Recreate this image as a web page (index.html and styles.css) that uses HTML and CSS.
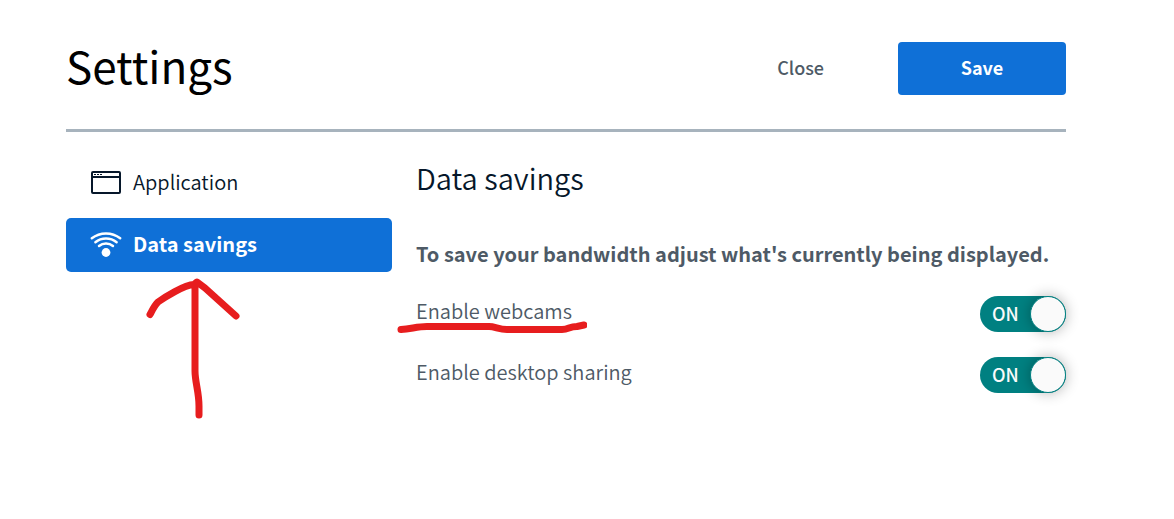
FILE: index.html
```html
<!DOCTYPE html>
<html lang="en">
<head>
<meta charset="utf-8">
<meta name="viewport" content="width=device-width, initial-scale=1">
<title>Settings</title>
<link rel="stylesheet" href="styles.css">
</head>
<body>
<main class="settings">
  <header class="header">
    <h1 class="title">Settings</h1>
    <div class="actions">
      <button class="btn btn-close" type="button">Close</button>
      <button class="btn btn-save" type="button">Save</button>
    </div>
  </header>
  <div class="body">
    <nav class="tabs" aria-label="Settings sections">
      <button class="tab" type="button">
        <svg class="icon" viewBox="0 0 32 28" aria-hidden="true">
          <rect x="2" y="4" width="28" height="21" rx="1" fill="none" stroke="currentColor" stroke-width="2"/>
          <path d="M2 9h28" stroke="currentColor" stroke-width="2"/>
          <path d="M4 6.500h2M7 6.500h2M10 6.500h2" stroke="currentColor" stroke-width="1"/>
        </svg>
        <span>Application</span>
      </button>
      <button class="tab tab-active" type="button" aria-current="true">
        <svg class="icon" viewBox="0 0 32 28" aria-hidden="true">
          <g fill="none" stroke="currentColor" stroke-width="2.500" stroke-linecap="round">
            <path d="M1.800 8.300Q8 3.400 16 3.400T30.200 8.300"/>
            <path d="M5.400 12.200Q10 8.500 16 8.500T26.600 12.200"/>
            <path d="M9 16Q12 13.500 16 13.500T23 16"/>
          </g>
          <circle cx="16" cy="22.500" r="4.400" fill="currentColor"/>
        </svg>
        <span>Data savings</span>
      </button>
    </nav>
    <section class="panel">
      <h2 class="panel-title">Data savings</h2>
      <p class="hint">To save your bandwidth adjust what's currently being displayed.</p>
      <div class="rows">
        <div class="row">
          <label class="row-label" for="webcams">Enable webcams</label>
          <span class="toggle">
            <input class="switch" id="webcams" type="checkbox" role="switch" checked>
            <span class="state" aria-hidden="true">ON</span>
          </span>
          <svg class="underline" viewBox="0 0 190 14" aria-hidden="true">
            <path d="M4 8.500C14 8 20 5.500 30 5.500H92C98 5.500 102 8.500 110 8.500H165C172 8.500 172 5.500 180 5.500L187 4"/>
          </svg>
        </div>
        <div class="row">
          <label class="row-label" for="desktop">Enable desktop sharing</label>
          <span class="toggle">
            <input class="switch" id="desktop" type="checkbox" role="switch" checked>
            <span class="state" aria-hidden="true">ON</span>
          </span>
        </div>
      </div>
    </section>
  </div>
  <svg class="arrow" viewBox="0 0 100 150" aria-hidden="true">
    <path d="M10 44.500C12 41 14 36 18 32C25 27 44 15 54 14.500L57 12L65 18L96 46M55 14V101C55 112 59 122 59 136V145"/>
  </svg>
</main>
</body>
</html>
```
FILE: styles.css
```css
*, *::before { box-sizing: border-box; }

body {
  margin: 0;
  background: #fff;
  color: #4e5a66;
  font-family: "Noto Sans CJK SC", "Noto Sans", sans-serif;
  font-size: 20px;
  line-height: 24px;
}

button { font: inherit; border: 0; cursor: pointer; }

.settings {
  position: relative;
  padding: 42px 108px 42px 66px;
}

.header {
  display: flex;
  align-items: flex-start;
  justify-content: space-between;
  padding-bottom: 34px;
  border-bottom: 3px solid #a7b3bd;
}

.title {
  margin: 0;
  color: #000;
  font-size: 44px;
  font-weight: 400;
  line-height: 46px;
}

.actions { display: flex; gap: 26px; }

.btn {
  padding: 13px 48px 15px;
  border-radius: 4px;
  font-size: 18px;
  line-height: 25px;
}

.btn-close { background: none; color: #4e5a66; font-weight: 500; }

.btn-save {
  min-width: 168px;
  background: #0f70d7;
  color: #fff;
  font-weight: 700;
}

.body {
  display: grid;
  grid-template-columns: minmax(0, 326fr) minmax(0, 650fr);
  gap: 24px;
  padding-top: 24px;
}

.tabs { display: flex; flex-direction: column; gap: 8px; }

.tab {
  display: flex;
  align-items: center;
  gap: 11px;
  padding: 14px 24px 16px;
  border-radius: 5px;
  background: none;
  color: #06172a;
  font-weight: 350;
  text-align: left;
}

.tab-active { background: #0f70d7; color: #fff; font-weight: 700; }

.icon { flex: none; width: 32px; height: 28px; margin: -2px 0; }

.panel-title {
  margin: 0;
  color: #06172a;
  font-size: 29px;
  font-weight: 350;
  line-height: 42px;
}

.hint { margin: 44px 0 0; font-weight: 700; }

.rows { display: grid; gap: 25px; padding-top: 30px; }

.row {
  position: relative;
  display: flex;
  align-items: center;
  justify-content: space-between;
}

.row-label { padding-bottom: 7px; font-weight: 350; }

.toggle { position: relative; display: flex; }

.switch {
  appearance: none;
  display: flex;
  justify-content: flex-end;
  width: 86px;
  height: 36px;
  margin: 0;
  border-radius: 18px;
  background: #008081;
  cursor: pointer;
}

.switch::before {
  content: "";
  width: 36px;
  height: 36px;
  border: 1px solid #008081;
  border-radius: 50%;
  background: #fafafa;
  box-shadow: 0 0 14px rgba(0, 0, 0, 0.3);
}

.state {
  position: absolute;
  top: 5px;
  left: 12px;
  color: #fafafa;
  font-size: 18px;
  font-weight: 500;
  pointer-events: none;
}

.underline,
.arrow {
  position: absolute;
  fill: none;
  stroke: #e71d1e;
  stroke-linecap: round;
  stroke-linejoin: round;
  pointer-events: none;
}

.underline { top: 25px; left: -19px; width: 190px; height: 14px; stroke-width: 7px; }

.arrow { top: 270px; left: 140px; width: 100px; height: 150px; stroke-width: 7px; }
```
